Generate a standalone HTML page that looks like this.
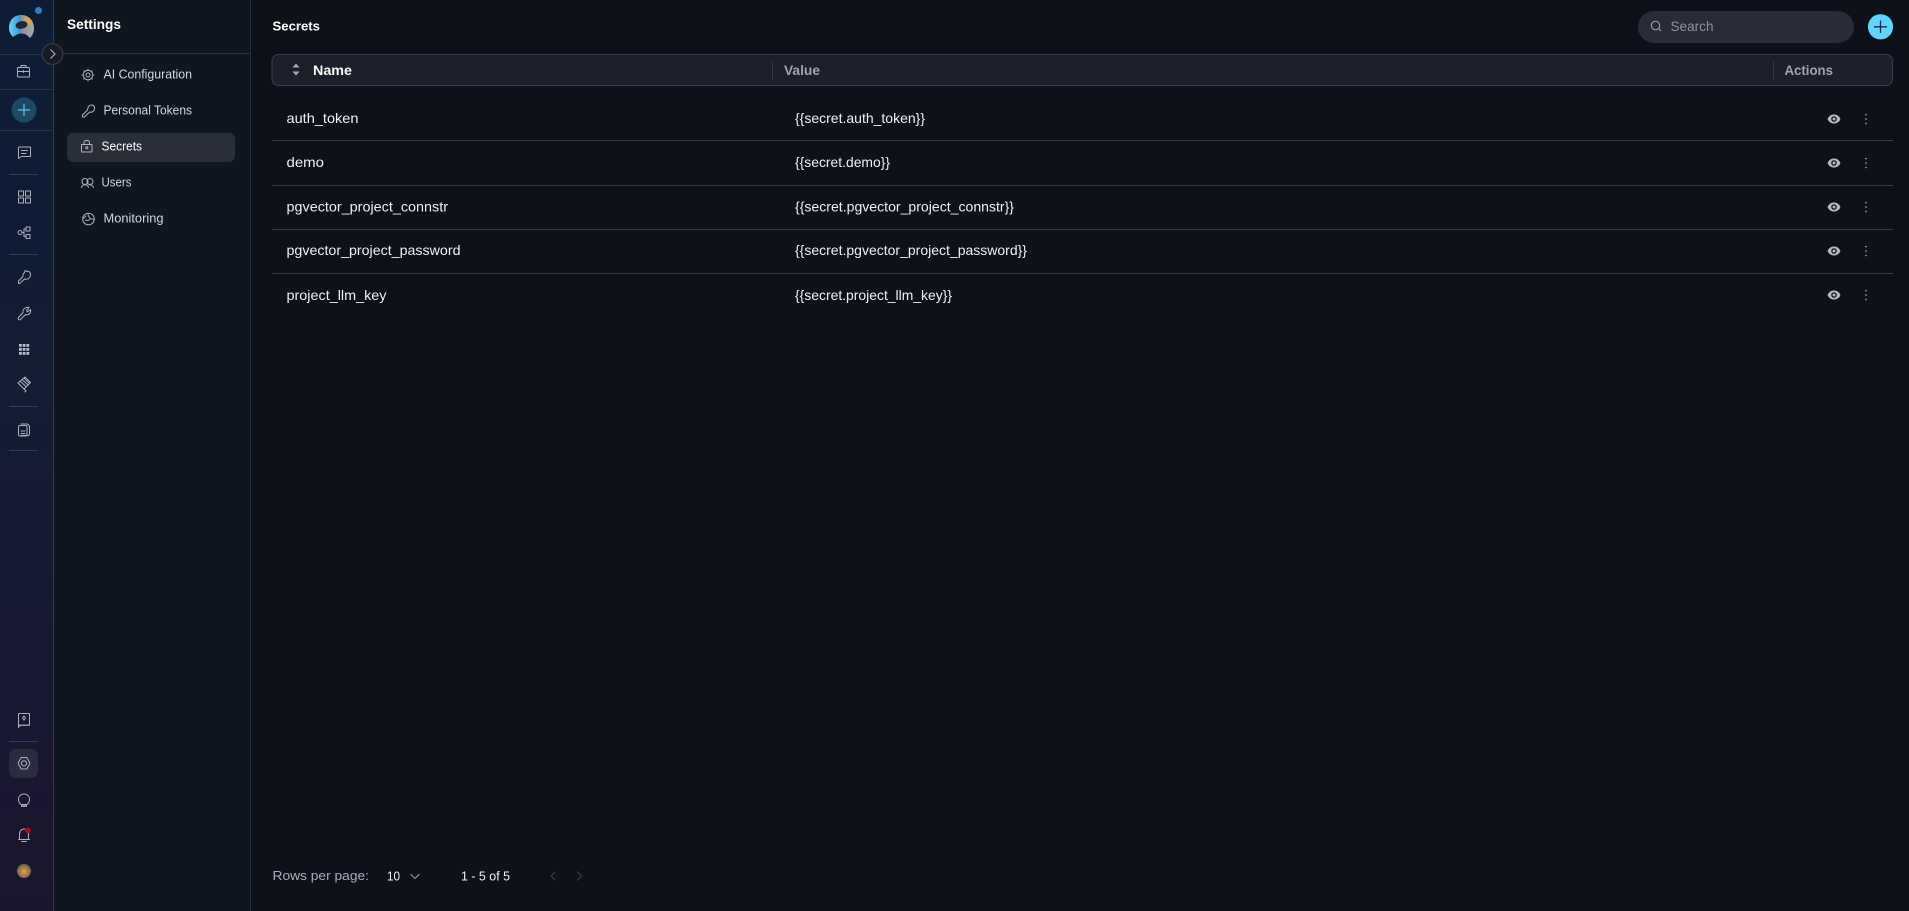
<!DOCTYPE html>
<html lang="en"><head><meta charset="utf-8"><title>Settings - Secrets</title>
<style>
html,body{margin:0;padding:0;background:#0e111a;width:1909px;height:911px;overflow:hidden}
svg{display:block}
text{font-family:"Liberation Sans","DejaVu Sans",sans-serif;white-space:pre}
.nav{font-size:12.5px;fill:#d0d7e0}
.row{font-size:14px;fill:#eef0f3}
.ic{fill:none;stroke:#abb1bb;stroke-width:1;stroke-linecap:round;stroke-linejoin:round}
.rl{stroke:#2b3245;stroke-width:1}
.ln{stroke:#383c45;stroke-width:1}
</style></head><body>
<svg width="1909" height="911" viewBox="0 0 1909 911" xmlns="http://www.w3.org/2000/svg">
<defs>
<linearGradient id="rail" x1="0" y1="0" x2="0" y2="1"><stop offset="0" stop-color="#0d1c34"/><stop offset=".4" stop-color="#121c33"/><stop offset="1" stop-color="#1a152d"/></linearGradient>
<linearGradient id="lb" x1="0" y1="0" x2="1" y2="0"><stop offset="0" stop-color="#6bd0f7"/><stop offset=".45" stop-color="#3f95cf"/><stop offset=".5" stop-color="#8f949b"/><stop offset="1" stop-color="#a5a9af"/></linearGradient>
<radialGradient id="av" cx=".5" cy=".55" r=".55"><stop offset="0" stop-color="#d9a35a"/><stop offset=".6" stop-color="#a9763f"/><stop offset="1" stop-color="#59646f"/></radialGradient>
</defs>
<rect width="1909" height="911" fill="#0e111a"/>
<rect width="53" height="911" fill="url(#rail)"/>
<rect x="53" width="1" height="911" fill="#343844"/>
<rect x="54" width="196" height="911" fill="#10161f"/>
<rect x="250" width="1" height="911" fill="#2b2f39"/>
<rect x="54" y="53" width="196" height="1" fill="#2d323c"/>

<!-- rail separators -->
<g class="rl"><path d="M0 54.5H53M0 89.5H53M0 130.5H53"/></g>
<g stroke="#343b4d"><path d="M9 174.5H38M9 254.5H38M9 406.5H38M9 450.5H38M9 741.5H38"/></g>

<!-- logo -->
<path d="M13 37C10 34 9 31 9 28C9 20 14 15 21.500 15C29 15 34 21 34 28C34 32 33 35 30 38C27 35 25 33.500 21.500 33.500C18 33.500 16 35 13 37Z" fill="url(#lb)"/>
<path d="M25 16C29 17 32 20 33 24L27.500 25.500C27.500 23 26 21 24 20Z" fill="#d8a253"/>
<ellipse cx="21.500" cy="25" rx="6" ry="3.800" transform="rotate(-10 21.500 25)" fill="#1a2a3a"/>
<circle cx="38.500" cy="10.500" r="3.500" fill="#2f7fc0"/>

<!-- toggle -->
<circle cx="52.500" cy="54" r="10.300" fill="#171b24" stroke="#3c404a"/>
<path d="M50.500 49.500L55 54L50.500 58.500" fill="none" stroke="#aeb4bd" stroke-width="1.100"/>

<!-- briefcase -->
<g class="ic"><rect x="17.500" y="67.500" width="12" height="9.500" rx="1"/><path d="M21 67.500V65.500H26V67.500M17.500 71.500H29.500M23.500 70.500V72.500"/></g>
<!-- plus -->
<circle cx="24" cy="110" r="12.500" fill="#1c4a63"/>
<path d="M24 104V116M18 110H30" stroke="#63c6ee" stroke-width="1.200"/>
<!-- chat -->
<g class="ic"><path d="M19 147H30.500V156.500H21.500L18.500 158.500V147.500Z"/><path d="M21.500 150.500H27.500M21.500 153.500H26"/></g>
<!-- grid -->
<g class="ic"><rect x="18.500" y="191" width="5" height="5"/><rect x="25.500" y="191" width="5" height="5"/><rect x="18.500" y="198" width="5" height="5"/><rect x="25.500" y="198" width="5" height="5"/></g>
<!-- flow -->
<g class="ic"><circle cx="20" cy="232.500" r="2"/><rect x="26" y="227" width="4" height="4"/><rect x="26" y="234.500" width="4" height="4"/><path d="M22 232.500H24M24 229V236.500M24 229H26M24 236.500H26"/></g>
<!-- key -->
<g class="ic"><path d="M24.500 272.500C24.500 269.500 27 271 26.500 271.500C29.500 270.500 30.700 273 30.500 275C30.300 278 27.500 280 24.500 279L19.500 283.500H18.500V281L23 276.500C22.500 275.500 23.500 273 24.500 272.500Z"/></g>
<!-- wrench -->
<g class="ic"><path d="M26.500 307.500C28 307 29 307 29 307.500L26.500 310.500L27.500 312L30.500 309.500C31 311 30.500 313.500 28.500 314.500C27 315 26 315 25.500 314.500L20.500 319.500C19 320.500 17.500 319 18.500 317.500L23 312.500C22.500 310 24 308 26.500 307.500Z"/></g>
<!-- apps -->
<g fill="#b7bdc6"><rect x="19" y="344" width="2.800" height="2.800"/><rect x="22.700" y="344" width="2.800" height="2.800"/><rect x="26.400" y="344" width="2.800" height="2.800"/><rect x="19" y="348" width="2.800" height="2.800"/><rect x="22.700" y="348" width="2.800" height="2.800"/><rect x="26.400" y="348" width="2.800" height="2.800"/><rect x="19" y="352" width="2.800" height="2.800"/><rect x="22.700" y="352" width="2.800" height="2.800"/><rect x="26.400" y="352" width="2.800" height="2.800"/></g>
<!-- tape -->
<g class="ic"><path d="M18 383L25 377L30.500 382.500L24 389L18 383Z"/><path d="M20 381L26 386.500M22 379.500L28 385M24 378L29.500 383.500M24 389L26 391L25 392"/></g>
<!-- doc -->
<g class="ic"><path d="M21 424H27.500L29.500 426V434C29.500 435 29 435.500 28 435.500H21"/><rect x="18.500" y="425.500" width="8.500" height="10.500" rx="1.500"/><path d="M21 431H25M21 433.500H25"/></g>
<!-- book -->
<g class="ic"><path d="M19 713.500H29.500V725H21C19.500 725 18.500 726 18.500 727.500V715C18.500 714 18.800 713.500 19 713.500Z"/></g>
<path d="M19 724.500H29.500V726H21L19 727Z" fill="#8f96a0"/>
<path d="M24 716L25.500 718L24 720L22.500 718Z" fill="none" stroke="#abb1bb"/>
<!-- settings -->
<rect x="9" y="749" width="29" height="29" rx="7" fill="#2a2b3d"/>
<g class="ic" stroke="#c3c9d2"><path d="M21.200 757.500H26.800L30 763.300L26.800 769H21.200L18 763.300Z"/><circle cx="24" cy="763.300" r="2.600"/></g>
<!-- bulb -->
<g class="ic"><path d="M21 804.500C19 803 18.500 801 18.500 799.500C18.500 796 21 794 24 794C27 794 29.500 796 29.500 799.500C29.500 801 29 803 27 804.500Z"/></g>
<rect x="21" y="804.500" width="6" height="2.500" fill="#8f96a0"/>
<!-- bell -->
<g class="ic"><path d="M19.500 839V834C19.500 831 21.500 829 24 829C26.500 829 28.500 831 28.500 834V839M18.500 839.500H29.500M21.500 841.500H26.500"/></g>
<circle cx="28" cy="830.500" r="3" fill="#9e0f23"/>
<!-- avatar -->
<circle cx="24" cy="871" r="7" fill="url(#av)"/>

<!-- settings panel -->
<text x="67" y="29" font-size="14" font-weight="700" fill="#fff" textLength="54" lengthAdjust="spacingAndGlyphs">Settings</text>
<rect x="67" y="133" width="168" height="29" rx="6" fill="#292e39"/>
<text class="nav" x="103.500" y="78.500" textLength="88.500" lengthAdjust="spacingAndGlyphs">AI Configuration</text>
<text class="nav" x="103.500" y="114.500" textLength="88.500" lengthAdjust="spacingAndGlyphs">Personal Tokens</text>
<text class="nav" x="101.500" y="150.500" textLength="40.500" lengthAdjust="spacingAndGlyphs" style="fill:#fff">Secrets</text>
<text class="nav" x="101.500" y="186.500" textLength="30" lengthAdjust="spacingAndGlyphs">Users</text>
<text class="nav" x="103.500" y="222.500" textLength="60" lengthAdjust="spacingAndGlyphs">Monitoring</text>
<!-- gear -->
<g class="ic" stroke="#9aa0aa"><circle cx="88" cy="75" r="4.800"/><circle cx="88" cy="75" r="2"/><path d="M88 69V70.200M88 79.800V81M82 75H83.200M92.800 75H94M83.800 70.800L84.600 71.600M91.400 78.400L92.200 79.200M83.800 79.200L84.600 78.400M91.400 71.600L92.200 70.800"/></g>
<!-- key -->
<g class="ic" stroke="#9aa0aa"><path d="M88 108C88 106 90 105 91.500 105C93.500 105 94.500 106.500 94.500 108.500C94.500 111 92 113 89.500 112L84.500 117H82.500V115L87.500 110C87.500 109 87.800 108.500 88 108Z"/></g>
<!-- lock -->
<g class="ic" stroke="#f0f2f4"><rect x="81.500" y="144.500" width="10.500" height="7.500" /><path d="M84 144.500V142.500C84 141 85 140.500 86.800 140.500C88.500 140.500 89.500 141 89.500 142.500V144.500"/><circle cx="86.800" cy="147.800" r="1"/></g>
<!-- users -->
<g class="ic" stroke="#9aa0aa"><circle cx="85" cy="181.500" r="3"/><circle cx="90" cy="181.500" r="3"/><path d="M81.500 187.500C82 185.500 83.500 184.800 85 184.800C86.500 184.800 88 185.500 88.500 187.500M89 184.800C91 184.800 93 185.500 93.500 187.500"/></g>
<!-- monitoring -->
<g class="ic" stroke="#9aa0aa"><circle cx="88.500" cy="219" r="5.800"/><path d="M88 213.500C88 216 89 217.500 90.500 218.500C92 219.500 93 219.500 94 219M90.500 218.500C89.500 220.500 87.500 221 85.500 220M83 218.500L86 216"/></g>

<!-- main header -->
<text x="272.500" y="30.500" font-size="13" font-weight="700" fill="#fff" textLength="47.500" lengthAdjust="spacingAndGlyphs">Secrets</text>
<rect x="1638" y="11" width="216" height="32" rx="16" fill="#282c36"/>
<circle cx="1655.500" cy="25.500" r="4.200" fill="none" stroke="#a4a9b1" stroke-width="1"/><path d="M1658.500 28.500L1661 31" stroke="#a4a9b1" stroke-width="1"/>
<text x="1670.500" y="31" font-size="14" fill="#8f949c" textLength="43" lengthAdjust="spacingAndGlyphs">Search</text>
<circle cx="1880.500" cy="26.800" r="12.600" fill="#5fd5fb"/>
<path d="M1880.500 20.500V33M1874 26.800H1887" stroke="#173048" stroke-width="1.300"/>

<!-- table head -->
<rect x="272" y="54.500" width="1620.500" height="31" rx="6.500" fill="#1c202a" stroke="#3a3e48"/>
<path d="M296 63.500L299.500 67.500H292.500ZM296 75.500L292.500 71.500H299.500Z" fill="#a7abb2"/>
<text x="313" y="75" font-size="13.500" font-weight="700" fill="#f6f7f8" textLength="39" lengthAdjust="spacingAndGlyphs">Name</text>
<rect x="772" y="62" width="1" height="18" fill="#343842"/>
<text x="784" y="75" font-size="13.500" font-weight="700" fill="#a0a4ac" textLength="36" lengthAdjust="spacingAndGlyphs">Value</text>
<rect x="1773" y="62" width="1" height="18" fill="#343842"/>
<text x="1784.500" y="75" font-size="13.500" font-weight="700" fill="#a0a4ac" textLength="48.500" lengthAdjust="spacingAndGlyphs">Actions</text>

<!-- rows -->
<g class="ln"><path d="M272 140.500H1893M272 185.500H1893M272 229.500H1893M272 273.500H1893"/></g>
<g>
<text class="row" x="286.500" y="123" textLength="72" lengthAdjust="spacingAndGlyphs">auth_token</text>
<text class="row" x="795" y="123" textLength="130" lengthAdjust="spacingAndGlyphs">{{secret.auth_token}}</text>
<text class="row" x="286.500" y="167" textLength="37.500" lengthAdjust="spacingAndGlyphs">demo</text>
<text class="row" x="795" y="167" textLength="95" lengthAdjust="spacingAndGlyphs">{{secret.demo}}</text>
<text class="row" x="286.500" y="211.500" textLength="161.500" lengthAdjust="spacingAndGlyphs">pgvector_project_connstr</text>
<text class="row" x="795" y="211.500" textLength="219" lengthAdjust="spacingAndGlyphs">{{secret.pgvector_project_connstr}}</text>
<text class="row" x="286.500" y="255" textLength="174" lengthAdjust="spacingAndGlyphs">pgvector_project_password</text>
<text class="row" x="795" y="255" textLength="232" lengthAdjust="spacingAndGlyphs">{{secret.pgvector_project_password}}</text>
<text class="row" x="286.500" y="300" textLength="100" lengthAdjust="spacingAndGlyphs">project_llm_key</text>
<text class="row" x="795" y="300" textLength="157" lengthAdjust="spacingAndGlyphs">{{secret.project_llm_key}}</text>
</g>
<!-- row actions -->
<g fill="#b4bac2">
<g transform="translate(0 0)"><path fill-rule="evenodd" d="M1827.500 119C1829 115.700 1831.300 114.500 1834 114.500C1836.700 114.500 1839 115.700 1840.500 119C1839 122.300 1836.700 123.500 1834 123.500C1831.300 123.500 1829 122.300 1827.500 119ZM1834 116.200A2.800 2.800 0 1 0 1834 121.800A2.800 2.800 0 1 0 1834 116.200Z"/><circle cx="1834" cy="119" r="1.500"/><circle cx="1866" cy="114.500" r=".8"/><circle cx="1866" cy="119" r=".8"/><circle cx="1866" cy="123.500" r=".8"/></g>
<g transform="translate(0 44)"><path fill-rule="evenodd" d="M1827.500 119C1829 115.700 1831.300 114.500 1834 114.500C1836.700 114.500 1839 115.700 1840.500 119C1839 122.300 1836.700 123.500 1834 123.500C1831.300 123.500 1829 122.300 1827.500 119ZM1834 116.200A2.800 2.800 0 1 0 1834 121.800A2.800 2.800 0 1 0 1834 116.200Z"/><circle cx="1834" cy="119" r="1.500"/><circle cx="1866" cy="114.500" r=".8"/><circle cx="1866" cy="119" r=".8"/><circle cx="1866" cy="123.500" r=".8"/></g>
<g transform="translate(0 88)"><path fill-rule="evenodd" d="M1827.500 119C1829 115.700 1831.300 114.500 1834 114.500C1836.700 114.500 1839 115.700 1840.500 119C1839 122.300 1836.700 123.500 1834 123.500C1831.300 123.500 1829 122.300 1827.500 119ZM1834 116.200A2.800 2.800 0 1 0 1834 121.800A2.800 2.800 0 1 0 1834 116.200Z"/><circle cx="1834" cy="119" r="1.500"/><circle cx="1866" cy="114.500" r=".8"/><circle cx="1866" cy="119" r=".8"/><circle cx="1866" cy="123.500" r=".8"/></g>
<g transform="translate(0 132)"><path fill-rule="evenodd" d="M1827.500 119C1829 115.700 1831.300 114.500 1834 114.500C1836.700 114.500 1839 115.700 1840.500 119C1839 122.300 1836.700 123.500 1834 123.500C1831.300 123.500 1829 122.300 1827.500 119ZM1834 116.200A2.800 2.800 0 1 0 1834 121.800A2.800 2.800 0 1 0 1834 116.200Z"/><circle cx="1834" cy="119" r="1.500"/><circle cx="1866" cy="114.500" r=".8"/><circle cx="1866" cy="119" r=".8"/><circle cx="1866" cy="123.500" r=".8"/></g>
<g transform="translate(0 176)"><path fill-rule="evenodd" d="M1827.500 119C1829 115.700 1831.300 114.500 1834 114.500C1836.700 114.500 1839 115.700 1840.500 119C1839 122.300 1836.700 123.500 1834 123.500C1831.300 123.500 1829 122.300 1827.500 119ZM1834 116.200A2.800 2.800 0 1 0 1834 121.800A2.800 2.800 0 1 0 1834 116.200Z"/><circle cx="1834" cy="119" r="1.500"/><circle cx="1866" cy="114.500" r=".8"/><circle cx="1866" cy="119" r=".8"/><circle cx="1866" cy="123.500" r=".8"/></g>
</g>

<!-- pagination -->
<text x="272.500" y="880" font-size="13" fill="#a5b0bd" textLength="96.500" lengthAdjust="spacingAndGlyphs">Rows per page:</text>
<text x="387" y="880.500" font-size="13" fill="#f4f5f7" textLength="13" lengthAdjust="spacingAndGlyphs">10</text>
<path d="M410.500 874L415 878.500L419.500 874" fill="none" stroke="#8f96a0" stroke-width="1"/>
<text x="461" y="880.500" font-size="13" fill="#f4f5f7" textLength="49" lengthAdjust="spacingAndGlyphs">1 - 5 of 5</text>
<path d="M555.500 871.500L551 876L555.500 880.500M577 871.500L581.500 876L577 880.500" fill="none" stroke="#3a3f49" stroke-width="1"/>
</svg>
</body></html>
